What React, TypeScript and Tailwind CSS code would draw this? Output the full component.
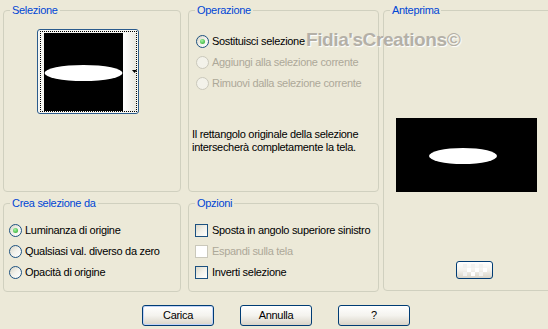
import React from "react";

const FONT = { fontFamily: '"Liberation Sans", Arial, sans-serif' };

function Group({
  label,
  className,
  children,
}: {
  label: string;
  className: string;
  children?: React.ReactNode;
}) {
  return (
    <fieldset
      className={`border border-[#d0d0bf] rounded-[4px] min-w-0 ${className}`}
    >
      <legend className="ml-[6px] px-[2px] text-[#0046d5] leading-[13px]">
        {label}
      </legend>
      {children}
    </fieldset>
  );
}

function Radio({
  checked,
  disabled,
  label,
}: {
  checked?: boolean;
  disabled?: boolean;
  label: string;
}) {
  return (
    <div className="flex items-center h-[21px]">
      <span
        className={
          disabled
            ? "w-[13px] h-[13px] rounded-full border border-[#cac8bb] bg-[#f3f2ea] flex items-center justify-center shrink-0"
            : "w-[13px] h-[13px] rounded-full border border-[#1c5180] bg-gradient-to-br from-[#d9d6c6] via-[#f3f2ec] to-white flex items-center justify-center shrink-0"
        }
      >
        {checked && (
          <span className="w-[5px] h-[5px] rounded-full bg-[radial-gradient(circle_at_40%_35%,#a4f6a4,#21a121)]" />
        )}
      </span>
      <span
        className={`ml-[3px] whitespace-nowrap ${
          disabled ? "text-[#aca899]" : "text-black"
        }`}
      >
        {label}
      </span>
    </div>
  );
}

function Check({ disabled, label }: { disabled?: boolean; label: string }) {
  return (
    <div className="flex items-center h-[21px]">
      <span
        className={
          disabled
            ? "w-[13px] h-[13px] border border-[#cac8bb] bg-white shrink-0"
            : "w-[13px] h-[13px] border border-[#1c5180] bg-gradient-to-br from-[#dcd9ca] via-[#f2f1ea] to-white shrink-0"
        }
      />
      <span
        className={`ml-[4px] whitespace-nowrap ${
          disabled ? "text-[#aca899]" : "text-black"
        }`}
      >
        {label}
      </span>
    </div>
  );
}

function Button({
  label,
  focused,
}: {
  label: string;
  focused?: boolean;
}) {
  return (
    <div
      className={`w-[72px] h-[21px] rounded-[3px] border border-[#003c74] bg-gradient-to-b from-white via-[#f4f3ee] to-[#d9d4c8] flex items-center justify-center text-black ${
        focused ? "shadow-[inset_0_0_0_1px_#c2d3f7]" : ""
      }`}
    >
      {label}
    </div>
  );
}

export default function App() {
  return (
    <div
      className="relative w-[548px] h-[329px] bg-[#ece9d8] overflow-hidden text-[11px] leading-[13px] tracking-[-0.3px]"
      style={FONT}
    >
      <div className="flex pt-[4px] pl-[3px]">
        {/* Left column */}
        <div className="flex flex-col w-[178px] shrink-0">
          <Group label="Selezione" className="h-[188px]">
            <div className="mt-[12px] ml-[33px] w-[102px] h-[85px] rounded-[3px] border border-[#2b5b8c] bg-[#f6f6f2] flex">
              <div className="ml-[2px] mr-[1px] my-[1px] flex-1 border border-dotted border-black flex pl-[3px] pt-[1px]">
                <svg width="79" height="78" viewBox="0 0 79 78" className="block">
                  <rect width="79" height="78" fill="#000" />
                  <ellipse cx="39.5" cy="40" rx="39" ry="8" fill="#fff" />
                </svg>
                <div className="flex-1 bg-gradient-to-r from-white to-[#e9e8e1] flex items-center justify-end pb-[2px]">
                  <svg width="5" height="3" viewBox="0 0 5 3" className="block -mr-[1px]">
                    <polygon points="0,0 5,0 2.5,3" fill="#000" />
                  </svg>
                </div>
              </div>
            </div>
          </Group>
          <Group label="Crea selezione da" className="h-[95px] mt-[5px]">
            <div className="pt-[10px] pl-[5px]">
              <Radio checked label="Luminanza di origine" />
              <Radio label="Qualsiasi val. diverso da zero" />
              <Radio label="Opacità di origine" />
            </div>
          </Group>
        </div>

        {/* Middle column */}
        <div className="flex flex-col w-[191px] ml-[7px] shrink-0">
          <Group label="Operazione" className="h-[188px]">
            <div className="pt-[14px] pl-[7px]">
              <Radio checked label="Sostituisci selezione" />
              <Radio disabled label="Aggiungi alla selezione corrente" />
              <Radio disabled label="Rimuovi dalla selezione corrente" />
            </div>
            <div className="mt-[34px] pl-[3px] text-black">
              <div>Il rettangolo originale della selezione</div>
              <div>intersecherà completamente la tela.</div>
            </div>
          </Group>
          <Group label="Opzioni" className="h-[95px] mt-[5px]">
            <div className="pt-[10px] pl-[6px]">
              <Check label="Sposta in angolo superiore sinistro" />
              <Check disabled label="Espandi sulla tela" />
              <Check label="Inverti selezione" />
            </div>
          </Group>
        </div>

        {/* Right column */}
        <div className="w-[172px] ml-[4px] shrink-0">
          <Group label="Anteprima" className="h-[287px]">
            <div className="mt-[101px] ml-[12px]">
              <svg width="141" height="74" viewBox="0 0 141 74" className="block">
                <rect width="141" height="74" fill="#000" />
                <ellipse cx="67" cy="38" rx="34" ry="8" fill="#fff" />
              </svg>
            </div>
            <div className="mt-[69px] ml-[72px] w-[37px] h-[18px] rounded-[3px] border border-[#003c74] bg-gradient-to-b from-white via-[#f4f3ee] to-[#d9d4c8] flex items-center justify-center">
              <svg width="24" height="12" viewBox="0 0 24 12" className="block">
                <rect x="0" y="0" width="4" height="4" fill="#f2f2f0" />
                <rect x="8" y="0" width="4" height="4" fill="#f2f2f0" />
                <rect x="16" y="0" width="4" height="4" fill="#f2f2f0" />
                <rect x="4" y="4" width="4" height="4" fill="#ffffff" />
                <rect x="12" y="4" width="4" height="4" fill="#ffffff" />
                <rect x="20" y="4" width="4" height="4" fill="#ffffff" />
                <rect x="0" y="8" width="4" height="4" fill="#f2f2f0" />
                <rect x="8" y="8" width="4" height="4" fill="#ffffff" />
                <rect x="16" y="8" width="4" height="4" fill="#f2f2f0" />
              </svg>
            </div>
          </Group>
        </div>
      </div>

      {/* Buttons */}
      <div className="flex gap-[26px] pl-[142px] mt-[13px]">
        <Button label="Carica" focused />
        <Button label="Annulla" />
        <Button label="?" />
      </div>

      {/* Watermark */}
      <div
        className="absolute left-[306px] top-[30px] text-[19px] leading-[19px] font-bold tracking-[-0.4px] text-[#b4b0a7] whitespace-nowrap [text-shadow:1px_1px_1px_#ffffff]"
        style={FONT}
      >
        Fidia'sCreations©
      </div>
    </div>
  );
}
